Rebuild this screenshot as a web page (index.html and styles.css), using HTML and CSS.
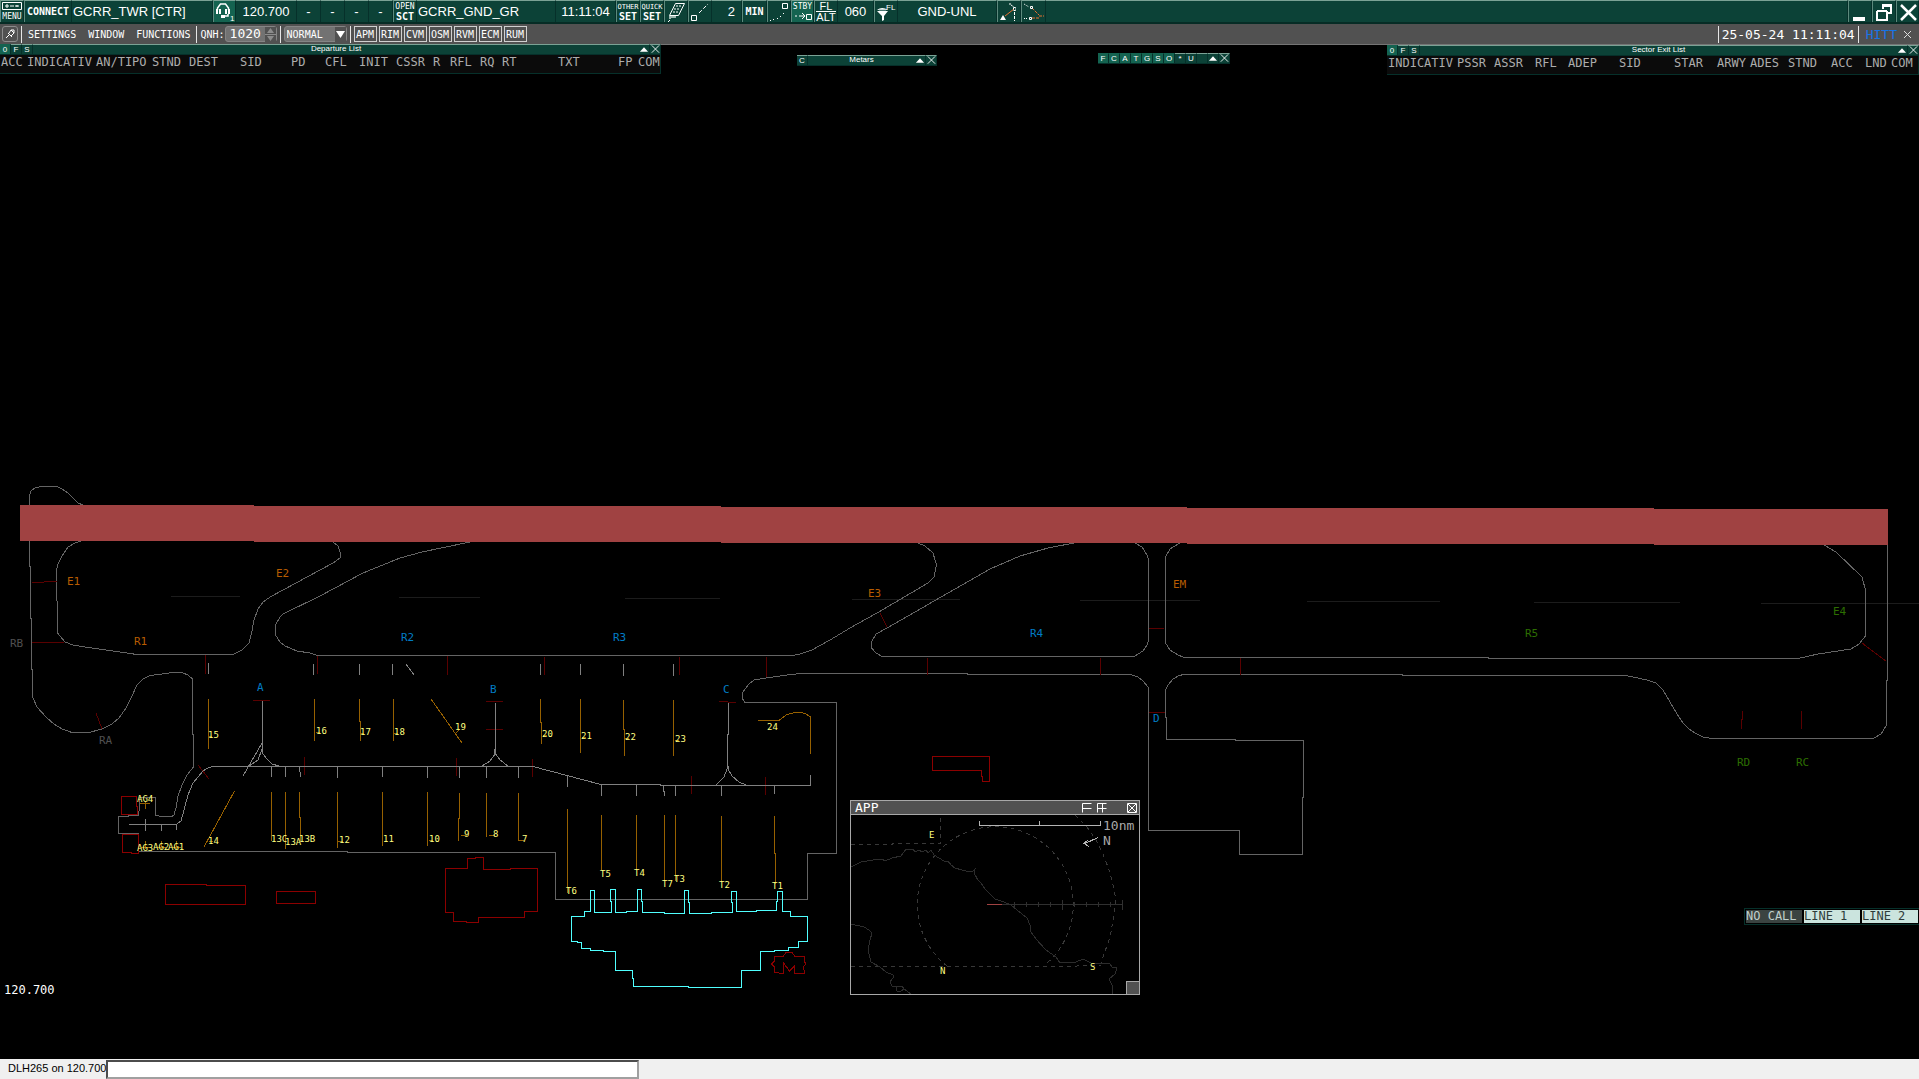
FILE: index.html
```
<!DOCTYPE html>
<html lang="en">
<head>
    <meta charset="UTF-8">
    <meta name="viewport" content="width=device-width, initial-scale=1.0">
    <title>GCRR_TWR</title>
    <link rel="stylesheet" href="styles.css">
</head>
<body>

    <svg class="symbols" aria-hidden="true">
        <symbol id="up" viewBox="0 0 11 9"><path d="M1 7h9L5.500 2z" fill="#fff"/></symbol>
        <symbol id="cross" viewBox="0 0 11 9"><path d="M2 0l8 8M10 0l-8 8" stroke="#fff" fill="none"/></symbol>
    </svg>

    <!-- Top toolbar -->
    <header class="topbar">
        <button class="cell stack" type="button" aria-label="Menu">
            <svg width="20" height="10" viewBox="0 0 20 10"><path d="M.5.5h19v7H.5zM3 4h4M5 2v4M9 3v2M13 4h4M15 3v2M11 3v2" stroke="#fff" fill="none"/></svg>
            <span class="tiny">MENU</span>
        </button>
        <button class="cell strong" type="button">CONNECT</button>
        <div class="cell left">GCRR_TWR [CTR]</div>
        <button class="cell on" type="button" aria-label="Headset">
            <svg width="20" height="20" viewBox="0 0 20 20"><path d="M2.500 8V6l3-4h5l3 4v2M13 12v2h-3" stroke="#fff" stroke-width="1.500" fill="none"/><path d="M1 7h2v5H1zM4 7h2v5H4zM10 7h2v5h-2zM13 7h2v5h-2zM6 13h4v3H6z" fill="#fff"/><text x="15" y="19" class="icon-text">1</text></svg>
        </button>
        <div class="cell">120.700</div>
        <div class="cell">-</div>
        <div class="cell">-</div>
        <div class="cell">-</div>
        <div class="cell">-</div>
        <button class="cell stack" type="button"><span class="tiny">OPEN</span><b>SCT</b></button>
        <div class="cell left">GCRR_GND_GR</div>
        <div class="cell">11:11:04</div>
        <button class="cell stack" type="button"><span class="micro">OTHER</span><b>SET</b></button>
        <button class="cell stack" type="button"><span class="micro">QUICK</span><b>SET</b></button>
        <button class="cell" type="button" aria-label="Label filter">
            <svg width="20" height="20" viewBox="0 0 20 20"><path d="M9.500 1.500h9l-6 12h-9z" stroke="#fff" fill="none"/><path d="M10 4h6M8 7h6M7 10h5" stroke="#fff" stroke-dasharray="2 1"/><path d="M3 14h7v2H5v1H3z" fill="#9db5ae"/><path d="M3 18h1v1H3zM2 19h1v1H2z" fill="#fff"/></svg>
        </button>
        <button class="cell" type="button" aria-label="Leader line">
            <svg width="20" height="20" viewBox="0 0 20 20"><path d="M1.500 13.500h5v5h-5z" stroke="#fff" fill="none"/><path d="M9 11l9-9" stroke="#fff" stroke-dasharray="4 2" fill="none"/></svg>
        </button>
        <div class="cell end">2</div>
        <button class="cell strong" type="button">MIN</button>
        <button class="cell" type="button" aria-label="History dots">
            <svg width="20" height="20" viewBox="0 0 20 20"><path d="M13.500 1.500h5v5h-5z" stroke="#fff" fill="none"/><path d="M1 18h1v1H1zM4 17h1v1H4zM8 16h1v1H8zM11 14h1v1h-1zM14 11h1v1h-1z" fill="#fff"/></svg>
        </button>
        <button class="cell stack on" type="button"><span class="tiny">STBY</span>
            <svg width="20" height="9" viewBox="0 0 20 9"><path d="M2 4h2M6 4h5M9 1l3 3-3 3M13.500 2.500h5v5h-5z" stroke="#fff" fill="none"/></svg>
        </button>
        <button class="cell stack fl" type="button"><span>FL</span><span>ALT</span></button>
        <div class="cell">060</div>
        <button class="cell" type="button" aria-label="Level filter">
            <svg width="22" height="20" viewBox="0 0 22 20"><path d="M2 9h11l-4 5v4l-2 1v-5zM2 8q5-4 11 0z" fill="#fff"/><path d="M4 8h7" stroke="#8aa"/><text x="11" y="8" class="icon-text">FL</text></svg>
        </button>
        <div class="cell">GND-UNL</div>
        <button class="cell" type="button" aria-label="Separation tool">
            <svg width="20" height="20" viewBox="0 0 20 20"><path d="M1 18h6L4 13z" fill="#fff"/><path d="M6 14l9-7" stroke="#e87030"/><path d="M14.500 5.500h2v3h-2zM15.500 10v9" stroke="#fff" stroke-dasharray="3 1" fill="none"/><path d="M10 2h2v1l3 2" stroke="#fff" stroke-dasharray="2 1" fill="none"/></svg>
        </button>
        <button class="cell" type="button" aria-label="Route tool">
            <svg width="22" height="20" viewBox="0 0 22 20"><path d="M9 6l7 7M9 16h7M16 14h5" stroke="#e87030" stroke-dasharray="3 1"/><path d="M7.500 4.500h2v2h-2zM6.500 15.500h2v2h-2z" stroke="#fff" fill="none"/><path d="M1 2l5 3M1 16.500h4" stroke="#fff" stroke-dasharray="1 1"/></svg>
        </button>
        <div class="cell"></div>
        <button class="cell" type="button" aria-label="Minimize"><svg width="20" height="20" viewBox="0 0 20 20"><path d="M3 15h12v4H3z" fill="#fff"/></svg></button>
        <button class="cell" type="button" aria-label="Restore"><svg width="20" height="20" viewBox="0 0 20 20"><path d="M3 8h10v2H3zM8 2h10v3H8z" fill="#fff"/><path d="M3 9v9h10V9M9 4v3M17 3v8h-3" stroke="#fff" stroke-width="2" fill="none"/></svg></button>
        <button class="cell" type="button" aria-label="Close"><svg width="20" height="20" viewBox="0 0 20 20"><path d="M3 3l15 15M18 3L3 18" stroke="#fff" stroke-width="2.500"/></svg></button>
    </header>

    <!-- Plugin toolbar -->
    <nav class="menubar">
        <div class="group">
            <button class="pin" type="button" aria-label="Pin"><svg width="14" height="14" viewBox="0 0 14 14"><path d="M3 11l3-3M5 6l4 4M6 6l2-3 3 3-3 3M8 3h3v3" stroke="#fff" fill="none"/></svg></button>
        </div>
        <div class="group menus">
            <button type="button">SETTINGS</button>
            <button type="button">WINDOW</button>
            <button type="button">FUNCTIONS</button>
        </div>
        <div class="group">
            <label for="qnh">QNH:</label>
            <span class="spin">
                <input id="qnh" type="text" value="1020">
                <svg width="11" height="15" viewBox="0 0 11 15"><path d="M2 6h7L5.500 1zM2 9h7l-3.500 5z" fill="#8c8c8c"/><path d="M0 7.500h11" stroke="#8c8c8c"/></svg>
            </span>
        </div>
        <div class="group">
            <span class="pick">
                <select aria-label="Mode"><option>NORMAL</option></select>
                <svg width="11" height="15" viewBox="0 0 11 15"><path d="M1 4h9l-4.500 7z" fill="#fff"/></svg>
            </span>
        </div>
        <div class="group keys">
            <button type="button">APM</button>
            <button type="button">RIM</button>
            <button type="button">CVM</button>
            <button type="button">OSM</button>
            <button type="button">RVM</button>
            <button type="button">ECM</button>
            <button type="button">RUM</button>
        </div>
        <div class="group clock">25-05-24 11:11:04</div>
        <div class="group brand">
            <span>HITT</span>
            <button type="button" aria-label="Close bar"><svg width="9" height="9" viewBox="0 0 9 9"><path d="M1 1l7 7M8 1L1 8" stroke="#ddd"/></svg></button>
        </div>
    </nav>

    <main class="scope">
        <!-- Ground map -->
        <svg class="map" viewBox="0 45 1919 1014" preserveAspectRatio="xMinYMin meet">
            <g class="centre">
                <path d="M171 596.500H240M399 597.500H480M625 598.500H720M852 599.500H960M1080 600.500H1200M1307 601.500H1440M1534 602.500H1680M1761 603.500H1919"/>
            </g>
            <g class="edge">
                <path d="M29.500 505V495L31 491 35 488 41 486.500H57L62 489 68 493 72 497 78 503 84 505.500"/>
                <path d="M29.500 541V566H30.500V618H31.500V669H32.500V697L37 707 47 718 54 724 62 729 72 732.500H89L102 729 112 724 119 718 126 708 132 696 137 685 143 679 150 675.500 162 674 173 672.500H182L188 675 192.500 679V734H193.500V767L187 775 182 785 178 796 176 808 174 815 172 816.500H163L155.500 815.500V797.500H139.500V806L138.500 815.500H128V816.500H118.500V833.500H139"/>
                <path d="M139 851.500H347V852.500H555.500V899.500H807.500V853.500H836.500V702.500H745L742 698V694L745 689 749 684 754 680 760 679 773 677 790 674.500 802 673.500H967V674.500H1131L1138 677 1143 681 1148 687V830.500H1239.500V854.500H1302.500V797H1303.500V740.500H1235V739.500H1166.500V717H1165.500V690L1168 685 1173 679 1179 675.500 1184 674.500H1402V675.500H1626L1647 680 1656 683 1663 690 1670 702 1677 714 1683 723 1689 729 1695 733 1703 737 1712 738.500H1873L1881 734 1886 726V680H1887.500V545"/>
                <path d="M81 541L75 543 68 547 62 556 58 564 56.500 570V600L57.500 602V633L65 642 73 645 85 647 137 654.500H233L242 650 249 643 252 631 254 620 258 609 263 602 271 596.500 333 563 340 558V552L338 546 333 542"/>
                <path d="M470 542L422 552 400 558 363 573 320 596 283 614 280 617 275.500 625V635L280 642 285 646 297 651 310 653 318 655.500H792L800 654 812 650 830 640 850 628 877 613 928 583 934 577 936.500 565 933 553 925 546 918 543"/>
                <path d="M1074 543L1048 548 1020 556 990 569 887 628 876 634 871.500 642V648L876 653 882 656.500H1134L1143 651 1147 645 1148.500 640V560L1147 555 1142 547 1135 543"/>
                <path d="M1180 543L1170 549 1166 556 1165.500 559V643L1170 650 1178 655 1184 657.500H1488V658.500H1798L1818 654 1851 649 1859 644 1865.500 636V590L1862 577 1836 552 1824 545"/>
            </g>
            <g class="bars">
                <path d="M32 582.500H44M44 581.500H57M32 642.500H64M96 713L102 729M205.500 655V674M317.500 656V674M253 700.500H270M304.500 757V775M198 765L209 779M447.500 656V675M544.500 657V675M679.500 657V675M766.500 657V677M486 701.500H503M486 729.500H503M719 701.500H728M728 702.500H736M456.500 758V776M532.500 759V777M691.500 776V794M765.500 777V795"/>
                <path d="M1149 628.500H1164M1149 712.500H1165M1240.500 658V675M1100.500 658V675M927.500 658V675M880 613L887 627M1742.500 711V719L1741.500 720V729M1801.500 711V729M1862 643L1886 661"/>
            </g>
            <g class="lanes">
                <path d="M129 824.500H176L181 821 184 810 188 795 193 783 203 771 208 768 213 766.500H533L601 784.500H660V785.500H810.500V775"/>
                <path d="M271.500 767V777M285.500 767V777M299.500 767V771L300.500 773V777M337.500 767V778M382.500 767V777M427.500 767V778M459.500 767V778M486.500 767V778M518.500 767V778M567.500 775V787M601.500 785V796M636.500 785V796M663.500 786V791L664.500 792V796M675.500 786V796M721.500 786V796M774.500 786V794"/>
                <path d="M208.500 663V674M313.500 664V675M359.500 664V675M392.500 664V675M406 664L414 675M540.500 664V675M580.500 664V675M623.500 664V676M673.500 664V676M145.500 819V831M161.500 825V831M176.500 825V830"/>
                <path d="M262.500 701V753L266 758 272 764 279 766M262 743L243 776M262 749L258 760 249 766"/>
                <path d="M495.500 703V754L500 760 508 766M494.500 749V755L490 761 482 766M728.500 703V734H727.500V768L724 777 716 785M728.500 766V770L732 776 739 782 746 785"/>
            </g>
            <g class="stands">
                <path d="M208.500 699V749M314.500 699V741M359.500 699V721H360.500V741M393.500 699V741M431 699L462 743M540.500 699V722H541.500V744M580.500 699V753M623.500 700V729H624.500V756M673.500 700V756M758 720.500H779L787 714.500 795 712.500H801L806 714 810.500 717V754"/>
                <path d="M234.500 791L204 847M271.500 792V841M285.500 792V849M299.500 792V817H300.500V841M337.500 792V848M382.500 792V846M427.500 792V846M459.500 793V818H458.500V841M486.500 793V837M518.500 793V841M567.500 809V893M601.500 815V870M636.500 815V870M664.500 815V881M675.500 815V881M721.500 816V882M774.500 816V853H775.500V884"/>
                <path d="M209 736.500H212M316 732.500H320M360 733.500H364M394 733.500H398M456 733L460 729M543 735.500H547M582 737.500H586M625 738.500H629M675 740.500H679M209 841.500H213M338 841.500H343M384 841.500H388M429 840.500H433M461 835.500H467M489 835.500H495M519 840.500H524M145.500 801V809M140 803.500H150M145.500 841V849M161.500 841V849M176.500 841V849M141 847.500H150M157 847.500H166M172 847.500H181"/>
            </g>
            <g class="buildings">
                <path d="M121.500 796.500H136.500V806H137.500V814.500H121.500ZM122.500 834.500H138.500V853.500H131V852.500H122.500ZM165.500 884.500H206V885.500H245.500V904.500H165.500ZM276.500 891.500H315.500V903.500H276.500Z"/>
                <path d="M445.500 868.500H467.500V858.500H475V857.500H483.500V869.500H510V868.500H537.500V911.500H524.500V917.500H478.500V922.500H466V921.500H453.500V912.500H445.500ZM932.500 756.500H989.500V781.500H982.500V776H981.500V770.500H932.500Z"/>
                <path d="M774.500 956.500H783L786 952.500H792L795 956.500H804.500V961L805.500 964 803.500 967 804.500 973.500H794.500V966L789.500 971 783.500 963V973.500L774.500 972.500V967L771.500 964 774.500 961Z"/>
            </g>
            <path class="terminal" d="M571.500 916.500H584.500V911.500H590.500V890.500H594.500V912.500H611.500V901H610.500V889.500H615.500V912.500H626V911.500H637.500V889.500H641.500V901H642.500V912.500H664V913.500H684.500V890.500H688.500V902H689.500V913.500H711V912.500H732.500V902H731.500V891.500H736.500V911.500H756V910.500H776.500V901H777.500V891.500H782.500V911.500H790.500V916.500H807.500V941.500H798.500V947.500H788.500V950.500H774V951.500H760.500V970.500H741.500V987.500H688V986.500H633.500V978.500H632.500V970.500H615.500V951.500H603V950.500H590.500V948.500H581.500V942.500H577V941.500H571.500Z"/>
            <path class="runway" d="M20 505H254V506H721V507H1187V508H1654V509H1888V545H1654V544H1187V543H721V542H254V541H20Z"/>

            <g class="taxi orange">
                <text x="67" y="585">E1</text><text x="276" y="577">E2</text><text x="134" y="645">R1</text><text x="868" y="597">E3</text><text x="1173" y="588">EM</text>
            </g>
            <g class="taxi blue">
                <text x="257" y="691">A</text><text x="490" y="693">B</text><text x="723" y="693">C</text><text x="1153" y="722">D</text><text x="401" y="641">R2</text><text x="613" y="641">R3</text><text x="1030" y="637">R4</text>
            </g>
            <g class="taxi green">
                <text x="1525" y="637">R5</text><text x="1833" y="615">E4</text><text x="1737" y="766">RD</text><text x="1796" y="766">RC</text>
            </g>
            <g class="taxi grey">
                <text x="10" y="647">RB</text><text x="99" y="744">RA</text>
            </g>
            <g class="stand-names">
                <text x="208" y="738">15</text><text x="316" y="734">16</text><text x="360" y="735">17</text><text x="394" y="735">18</text><text x="455" y="730">19</text><text x="542" y="737">20</text><text x="581" y="739">21</text><text x="625" y="740">22</text><text x="675" y="742">23</text><text x="767" y="730">24</text>
                <text x="208" y="844">14</text><text x="271" y="842">13C</text><text x="285" y="845">13A</text><text x="299" y="842">13B</text><text x="339" y="843">12</text><text x="383" y="842">11</text><text x="429" y="842">10</text><text x="464" y="837">9</text><text x="493" y="837">8</text><text x="522" y="842">7</text>
                <text x="566" y="894">T6</text><text x="600" y="877">T5</text><text x="634" y="876">T4</text><text x="662" y="887">T7</text><text x="674" y="882">T3</text><text x="719" y="888">T2</text><text x="772" y="889">T1</text>
                <text x="137" y="802">AG4</text><text x="137" y="851">AG3</text><text x="153" y="850">AG2</text><text x="168" y="850">AG1</text>
            </g>
        </svg>

        <!-- Departure list -->
        <section class="win departures">
            <div class="bar">
                <button class="lit" type="button">0</button><button type="button">F</button><button type="button">S</button>
                <h2>Departure List</h2>
                <button type="button" aria-label="Collapse"><svg><use href="#up"/></svg></button>
                <button type="button" aria-label="Close"><svg><use href="#cross"/></svg></button>
            </div>
            <table>
                <colgroup><col class="w26"><col class="w69"><col class="w56"><col class="w37"><col class="w51"><col class="w51"><col class="w34"><col class="w34"><col class="w37"><col class="w37"><col class="w17"><col class="w30"><col class="w22"><col class="w56"><col class="w60"><col class="w20"><col></colgroup>
                <tr><th>ACC</th><th>INDICATIV</th><th>AN/TIPO</th><th>STND</th><th>DEST</th><th>SID</th><th>PD</th><th>CFL</th><th>INIT</th><th>CSSR</th><th>R</th><th>RFL</th><th>RQ</th><th>RT</th><th>TXT</th><th>FP</th><th>COM</th></tr>
            </table>
        </section>

        <!-- Metars -->
        <section class="win metars">
            <div class="bar">
                <button type="button">C</button>
                <h2>Metars</h2>
                <button type="button" aria-label="Collapse"><svg><use href="#up"/></svg></button>
                <button type="button" aria-label="Close"><svg><use href="#cross"/></svg></button>
            </div>
        </section>

        <!-- List toggles -->
        <section class="win toggles">
            <div class="bar">
                <button class="lit" type="button">F</button><button class="lit" type="button">C</button><button class="lit" type="button">A</button><button class="lit" type="button">T</button><button class="lit" type="button">G</button><button class="lit" type="button">S</button><button class="lit" type="button">O</button><button type="button">*</button><button type="button">U</button><button type="button" aria-label="Blank"></button>
                <button type="button" aria-label="Collapse"><svg><use href="#up"/></svg></button>
                <button type="button" aria-label="Close"><svg><use href="#cross"/></svg></button>
            </div>
        </section>

        <!-- Sector exit list -->
        <section class="win exits">
            <div class="bar">
                <button class="lit" type="button">0</button><button type="button">F</button><button type="button">S</button>
                <h2>Sector Exit List</h2>
                <button type="button" aria-label="Collapse"><svg><use href="#up"/></svg></button>
                <button type="button" aria-label="Close"><svg><use href="#cross"/></svg></button>
            </div>
            <table>
                <colgroup><col class="w69"><col class="w37"><col class="w41"><col class="w33"><col class="w51"><col class="w55"><col class="w43"><col class="w33"><col class="w38"><col class="w43"><col class="w34"><col class="w26"><col></colgroup>
                <tr><th>INDICATIV</th><th>PSSR</th><th>ASSR</th><th>RFL</th><th>ADEP</th><th>SID</th><th>STAR</th><th>ARWY</th><th>ADES</th><th>STND</th><th>ACC</th><th>LND</th><th>COM</th></tr>
            </table>
        </section>

        <!-- Approach window -->
        <section class="approach">
            <div class="app-bar">
                <h2>APP</h2>
                <button type="button" aria-label="Zoom out"><svg width="10" height="10" viewBox="0 0 10 10"><path d="M9.500.5H.5v9M.5 5.500h9"/></svg></button>
                <button type="button" aria-label="Zoom in"><svg width="10" height="10" viewBox="0 0 10 10"><path d="M9.500.5H.5v9M.5 5.500h9M5.500.5v9"/></svg></button>
                <button class="app-close" type="button" aria-label="Close"><svg width="10" height="10" viewBox="0 0 10 10"><path d="M.5.5h9v9h-9zM1 1l8 8M9 1L1 9"/></svg></button>
            </div>
            <svg class="app-map" viewBox="851 815 288 179">
                <g class="limits">
                    <path d="M851 844.500H892V843.500H940.500V815M851 966.500H1068L1086 965.500H1101"/>
                    <path d="M947 966A78 78 0 1 1 1046 964M1075 815L1087 827 1096 840 1103 854 1108 867 1112 880 1115 895V906L1114 916 1110 937 1101 963"/>
                </g>
                <g class="coast">
                    <path d="M851 867L861 862 873 860 882 859 885 861 892 858 901 856 906 849 913 849 915 852 919 850 922 852 926 850 928 853 931 850 934 855 944 861 948 861 951 865 955 868 962 870 966 871 973 871 975 869 974 874 978 879 976 878 981 883 985 889 995 899 1004 902 1011 905 1017 910 1027 918 1030 925 1031 932 1036 939 1046 950 1056 957 1060 963 1076 962 1083 959 1091 963 1110 964 1112 967 1117 968 1115 974 1109 979 1113 987 1112 994"/>
                    <path d="M851 924L864 927 869 930 872 933 870 940 868 950 871 962 880 967 886 972 893 975 893 978 890 982 892 986 896 986 902 986 904 989 900 992 897 991 896 987M904 989L911 994"/>
                </g>
                <path class="axis" d="M1002 904.500H1122.500M1014.500 902V907M1026.500 902V907M1038.500 902V907M1050.500 902V907M1062.500 900V910M1074.500 902V907M1086.500 902V907M1098.500 902V907M1110.500 902V907M1122.500 900V910"/>
                <path class="strip" d="M987 904.500H1002"/>
                <path class="ruler" d="M979.500 821V825.500H1100.500V821M1039.500 821V825M1098 837.500L1085 843.500M1088 840L1084 843.500 1089 846.500"/>
                <g class="app-text"><text x="1103" y="830">10nm</text><text x="1103" y="845">N</text></g>
                <g class="stand-names"><text x="929" y="838">E</text><text x="940" y="974">N</text><text x="1090" y="970">S</text></g>
            </svg>
            <span class="grip"></span>
        </section>

        <!-- Voice lines -->
        <div class="voice">
            <button class="idle" type="button">NO CALL</button>
            <button type="button">LINE 1</button>
            <button type="button">LINE 2</button>
        </div>

        <div class="frequency">120.700</div>
    </main>

    <footer class="status">
        <label for="command">DLH265 on 120.700</label>
        <input id="command" type="text">
    </footer>

</body>
</html>
```
FILE: styles.css
```
* {
    box-sizing: border-box;
}
body {
    margin: 0;
    height: 100vh;
    display: flex;
    flex-direction: column;
    background: #000;
    color: #fff;
    font-family: "Liberation Sans", Arial, sans-serif;
    overflow: hidden;
}
button, input, select {
    font: inherit;
    color: inherit;
    margin: 0;
    padding: 0;
    border: 0;
    border-radius: 0;
    background: none;
}
h2 {
    margin: 0;
    font-weight: normal;
}
.symbols {
    display: none;
}

/* Top toolbar */
.topbar {
    display: grid;
    grid-template-columns: 24px 48px 141px 23px 61px repeat(5, 24px) 139px 60px repeat(4, 24px) 30px 25px 24px 23px 24px 36px 24px 99px 24px 25px 1fr 24px 24px 23px;
    height: 24px;
    background: #06302a;
    border-bottom: 2px solid #062c25;
    font-size: 13px;
}
.cell {
    display: flex;
    align-items: center;
    justify-content: center;
    min-width: 0;
    overflow: hidden;
    white-space: nowrap;
    background: #0c4237;
    border-top: 1px solid #7ba295;
    border-right: 1px solid #06302a;
}
button.cell {
    border-left: 1px solid #5d8a7d;
}
.cell svg {
    display: block;
    flex: none;
}
.cell.on {
    background: #146350;
}
.left {
    justify-content: flex-start;
    padding-left: 1px;
}
.end {
    justify-content: flex-end;
    padding-right: 6px;
}
.strong, .stack {
    font: bold 10px "DejaVu Sans Mono", monospace;
}
.stack {
    flex-direction: column;
    line-height: 10px;
}
.tiny {
    font-size: 8px;
    font-weight: normal;
}
.micro {
    font-size: 7px;
    font-weight: normal;
}
.fl {
    font: 11px/10px "Liberation Sans", Arial, sans-serif;
}
.fl span + span {
    border-top: 1px solid #fff;
}
.icon-text {
    font-size: 8px;
    fill: #fff;
}

/* Plugin toolbar */
.menubar {
    display: flex;
    align-items: center;
    height: 21px;
    padding-left: 2px;
    background: #515151;
    border-bottom: 1px solid #757575;
    font: 10px "DejaVu Sans Mono", monospace;
}
.group {
    display: flex;
    align-items: center;
    height: 17px;
    padding: 0 3px;
}
.group:first-child {
    padding-left: 0;
}
.group + .group {
    border-left: 1px solid #e6e6e6;
}
.pin {
    width: 16px;
    height: 16px;
    border: 1px solid #8c8c8c;
    border-radius: 3px;
}
.pin svg {
    display: block;
}
.menus {
    gap: 12px;
    padding: 0 6px;
}
.spin, .pick {
    display: flex;
    align-items: center;
    height: 16px;
    background: #727272;
    border: 1px solid #858585;
    border-radius: 3px;
}
.spin svg, .pick svg {
    background: #515151;
}
.spin input {
    width: 39px;
    padding-left: 4px;
    font-size: 13px;
    line-height: 14px;
}
.pick select {
    appearance: none;
    width: 50px;
    padding-left: 2px;
    white-space: nowrap;
}
.keys {
    gap: 2px;
}
.keys button {
    width: 23px;
    height: 16px;
    border: 1px solid #d0d0d0;
}
.clock {
    margin-left: auto;
    font-size: 13px;
}
.brand {
    gap: 6px;
    padding: 0 7px;
    color: #1674e8;
    font-size: 13px;
}
.brand svg {
    display: block;
}

/* Scope */
.scope {
    position: relative;
    flex: 1;
    min-height: 0;
}
.map {
    display: block;
    width: 100%;
    height: 100%;
}
.map path, .app-map path {
    fill: none;
    shape-rendering: crispEdges;
}
.centre path {
    stroke: #1c1c1c;
}
.edge path {
    stroke: #646464;
}
.lanes path {
    stroke: #808080;
}
.bars path {
    stroke: #5a0000;
}
.stands path {
    stroke: #966000;
}
.buildings path {
    stroke: #8c0000;
}
.map .terminal {
    stroke: #50ffff;
}
.map .runway {
    fill: #a04242;
}
.taxi {
    font: 11px "DejaVu Sans Mono", monospace;
}
.orange {
    fill: #b85c00;
}
.blue {
    fill: #007cc4;
}
.green {
    fill: #2c6e00;
}
.grey {
    fill: #505050;
}
.stand-names {
    font: 9px "DejaVu Sans Mono", monospace;
    fill: #ffff80;
}

/* List windows */
.win {
    position: absolute;
    background: #0b0b0b;
    border-bottom: 1px solid #06302a;
}
.bar {
    display: flex;
    height: 10px;
    background: #06302a;
    font-size: 8px;
    line-height: 8px;
    text-align: center;
}
.bar h2 {
    flex: 1;
    font-size: 8px;
    background: #0c4237;
    border-top: 1px solid #7ba295;
}
.bar button {
    width: 11px;
    height: 10px;
    background: #0c4237;
    border-top: 1px solid #7ba295;
    border-right: 1px solid #06302a;
    overflow: hidden;
}
.bar .lit {
    background: #146350;
    border-top-color: #146350;
}
.bar svg {
    display: block;
    width: 100%;
    height: 9px;
}
.win table {
    table-layout: fixed;
    width: 100%;
    border-collapse: collapse;
    border: 1px solid #06302a;
    border-width: 1px 1px 0 0;
}
.win th {
    padding: 0 0 3px 1px;
    height: 18px;
    font: 12px/14px "DejaVu Sans Mono", monospace;
    color: #adadad;
    text-align: left;
    white-space: nowrap;
}
.departures {
    top: -1px;
    left: 0;
    width: 661px;
}
.metars {
    top: 10px;
    left: 797px;
    width: 140px;
}
.toggles {
    top: 8px;
    left: 1098px;
}
.exits {
    top: 0;
    right: 0;
    width: 532px;
}
.w17 { width: 17px; }
.w20 { width: 20px; }
.w22 { width: 22px; }
.w26 { width: 26px; }
.w30 { width: 30px; }
.w33 { width: 33px; }
.w34 { width: 34px; }
.w37 { width: 37px; }
.w38 { width: 38px; }
.w41 { width: 41px; }
.w43 { width: 43px; }
.w51 { width: 51px; }
.w55 { width: 55px; }
.w56 { width: 56px; }
.w60 { width: 60px; }
.w69 { width: 69px; }

/* Approach window */
.approach {
    position: absolute;
    top: 755px;
    left: 850px;
    width: 290px;
    background: #000;
    border: 1px solid #a8a8a8;
}
.app-bar {
    display: flex;
    align-items: center;
    gap: 5px;
    height: 14px;
    padding: 0 2px 0 4px;
    background: #515151;
    border-bottom: 1px solid #a8a8a8;
}
.app-bar h2 {
    flex: 1;
    font: 13px/13px "DejaVu Sans Mono", monospace;
}
.app-bar svg {
    display: block;
    fill: none;
    stroke: #fff;
}
.app-close {
    margin-left: 15px;
}
.app-map {
    display: block;
    width: 100%;
}
.limits path {
    stroke: #383838;
    stroke-dasharray: 4 4;
}
.coast path {
    stroke: #2c2c2c;
}
.app-map .axis {
    stroke: #303030;
}
.app-map .strip {
    stroke: #a04242;
}
.app-map .ruler {
    stroke: #b4b4b4;
}
.app-text {
    font: 13px "DejaVu Sans Mono", monospace;
    fill: #a8a8a8;
}
.grip {
    position: absolute;
    right: 0;
    bottom: 0;
    width: 13px;
    height: 13px;
    background: #515151;
    border: 1px solid #a8a8a8;
    border-width: 1px 0 0 1px;
}

.voice {
    position: absolute;
    top: 863px;
    right: 0;
    display: flex;
    gap: 2px;
    padding: 1px;
    border: 1px solid #06302a;
    border-right: 0;
    font: 12px "DejaVu Sans Mono", monospace;
}
.voice button {
    width: 56px;
    height: 13px;
    line-height: 13px;
    text-align: left;
    white-space: nowrap;
    color: #2e3c3a;
    background: #cbe4de;
}
.voice .idle {
    color: #c0d0cc;
    background: #3b4341;
}
.frequency {
    position: absolute;
    left: 4px;
    bottom: 62px;
    font: 12px "DejaVu Sans Mono", monospace;
}

/* Status line */
.status {
    display: flex;
    align-items: center;
    height: 20px;
    padding-left: 8px;
    background: #f0f0f0;
    color: #000;
    font-size: 11px;
}
.status label {
    width: 98px;
    padding-bottom: 2px;
    white-space: nowrap;
}
.status input {
    width: 533px;
    height: 19px;
    background: #fff;
    border: 2px inset #a0a0a0;
}
```
